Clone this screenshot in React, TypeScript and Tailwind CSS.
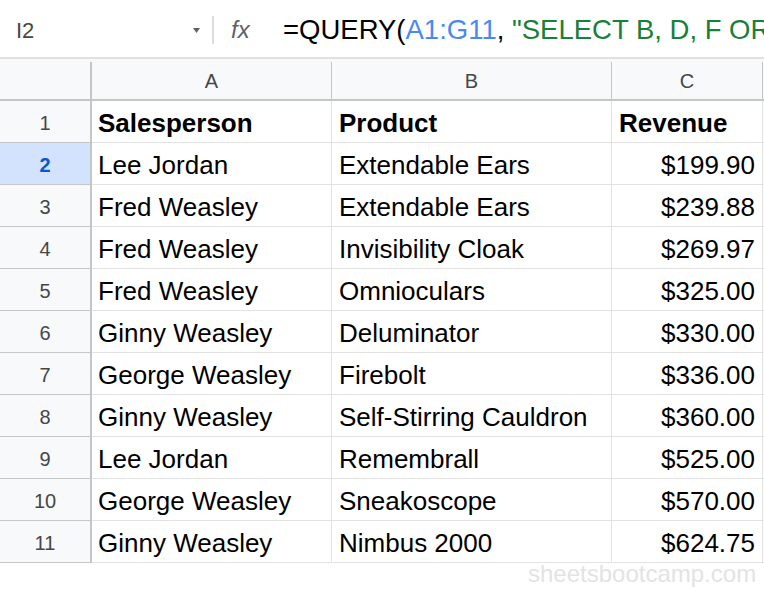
import React from "react";

const rows: [string, string, string][] = [
  ["Lee Jordan", "Extendable Ears", "$199.90"],
  ["Fred Weasley", "Extendable Ears", "$239.88"],
  ["Fred Weasley", "Invisibility Cloak", "$269.97"],
  ["Fred Weasley", "Omnioculars", "$325.00"],
  ["Ginny Weasley", "Deluminator", "$330.00"],
  ["George Weasley", "Firebolt", "$336.00"],
  ["Ginny Weasley", "Self-Stirring Cauldron", "$360.00"],
  ["Lee Jordan", "Remembrall", "$525.00"],
  ["George Weasley", "Sneakoscope", "$570.00"],
  ["Ginny Weasley", "Nimbus 2000", "$624.75"],
];

function FormulaBar() {
  return (
    <div className="flex h-[59px] items-center overflow-hidden border-b-2 border-[#e1e1e1] bg-white pt-[3px]">
      <div className="flex w-[212px] shrink-0 items-center justify-between pl-[16px] pr-[12px]">
        <span className="text-[22px] text-[#444746]">I2</span>
        <svg width="7" height="5" viewBox="0 0 7 5" className="mt-[1px] shrink-0">
          <path d="M0 0h7L3.5 5z" fill="#5f6368" />
        </svg>
      </div>
      <div className="h-[28px] w-[2px] shrink-0 bg-[#dadce0]" />
      <div className="w-[69px] shrink-0 pl-[17px] text-[24px] italic text-[#5f6368]">fx</div>
      <div className="shrink-0 whitespace-nowrap text-[27.5px] text-black">
        =QUERY(<span className="text-[#4a89f3]">A1:G11</span>,{" "}
        <span className="text-[#188038]">"SELECT B, D, F ORDER BY F"</span>)
      </div>
    </div>
  );
}

function HeaderRow() {
  return (
    <div className="flex h-[42px] border-b-2 border-[#c4c7c5] bg-[#f8f9fa] pt-[3px] text-[20px] text-[#444746]">
      <div className="w-[92px] shrink-0 border-r-2 border-[#c4c7c5]" />
      <div className="flex w-[240px] shrink-0 items-center justify-center border-r border-[#c4c7c5]">A</div>
      <div className="flex w-[280px] shrink-0 items-center justify-center border-r border-[#c4c7c5]">B</div>
      <div className="flex w-[151px] shrink-0 items-center justify-center border-r border-[#c4c7c5]">C</div>
      <div className="flex-1" />
    </div>
  );
}

function Row({ n, cells, bold, active }: { n: number; cells: [string, string, string]; bold?: boolean; active?: boolean }) {
  return (
    <div className="flex h-[42px] text-[26px] text-black">
      <div
        className={
          active
            ? "flex w-[92px] shrink-0 items-center justify-center border-r-2 border-b border-r-[#c4c7c5] border-b-[#c4c7c5] bg-[#d3e3fd] pt-[3px] text-[20px] font-bold text-[#0b57d0]"
            : "flex w-[92px] shrink-0 items-center justify-center border-r-2 border-b border-r-[#c4c7c5] border-b-[#c4c7c5] bg-[#f8f9fa] pt-[3px] text-[20px] text-[#444746]"
        }
      >
        {n}
      </div>
      <div className={"flex w-[240px] shrink-0 items-center border-r border-b border-[#e2e2e2] pt-[4px] pl-[6px] whitespace-nowrap" + (bold ? " font-bold" : "")}>
        {cells[0]}
      </div>
      <div className={"flex w-[280px] shrink-0 items-center border-r border-b border-[#e2e2e2] pt-[4px] pl-[7px] whitespace-nowrap" + (bold ? " font-bold" : "")}>
        {cells[1]}
      </div>
      <div
        className={
          bold
            ? "flex w-[151px] shrink-0 items-center border-r border-b border-[#e2e2e2] pt-[4px] pl-[7px] font-bold whitespace-nowrap"
            : "flex w-[151px] shrink-0 items-center justify-end border-r border-b border-[#e2e2e2] pt-[4px] pr-[7px] whitespace-nowrap"
        }
      >
        {cells[2]}
      </div>
      <div className="flex-1 border-b border-[#e2e2e2]" />
    </div>
  );
}

export default function App() {
  return (
    <div className="relative h-[590px] w-[764px] overflow-hidden bg-white font-['Liberation_Sans',Arial,sans-serif]">
      <FormulaBar />
      <HeaderRow />
      <Row n={1} cells={["Salesperson", "Product", "Revenue"]} bold />
      {rows.map((r, i) => (
        <Row key={i} n={i + 2} cells={r} active={i === 0} />
      ))}
      <div className="absolute left-[528px] top-[556px] whitespace-nowrap text-[24px] text-[#e3e3e3]">
        sheetsbootcamp.com
      </div>
    </div>
  );
}
